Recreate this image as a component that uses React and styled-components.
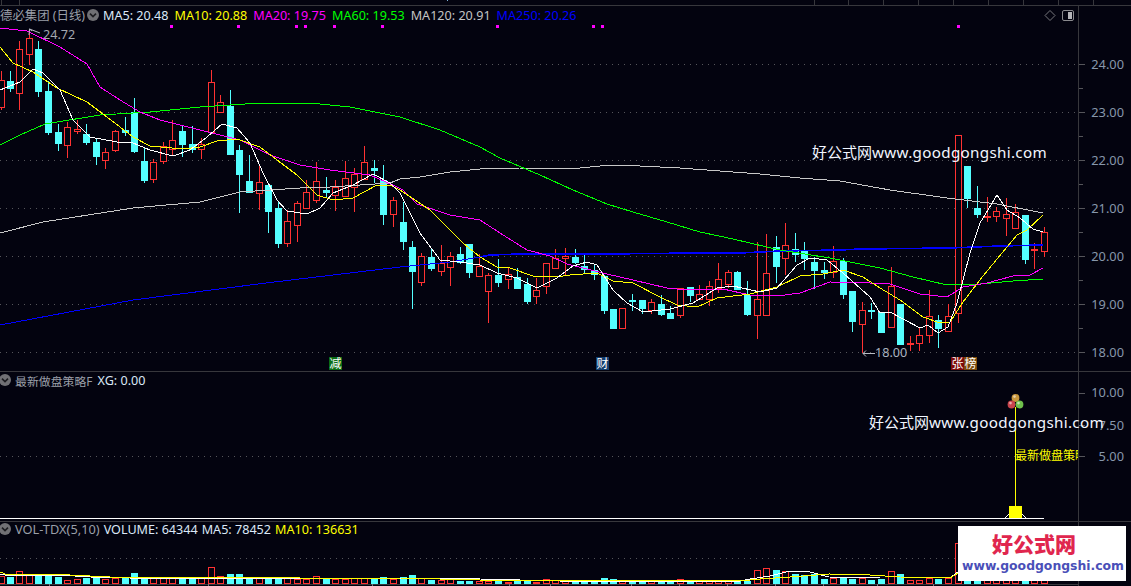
import React from "react";
import styled, { createGlobalStyle } from "styled-components";

const BG = "#03030f";
const LINE = "#37373c";
const RED = "#ff3232";
const CYAN = "#54ffff";
const FONT = `"Noto Sans", "Noto Sans CJK SC", sans-serif`;

const Global = createGlobalStyle`
  html, body { margin: 0; padding: 0; background: ${BG}; }
  *, *::before, *::after { box-sizing: border-box; }
`;

const Page = styled.div`
  position: relative;
  width: 1131px;
  height: 586px;
  overflow: hidden;
  background: ${BG};
  font-family: ${FONT};
  font-size: 12.6px;
  display: flex;
  flex-direction: column;
`;
const TopStrip = styled.svg`
  display: block;
  width: 1131px;
  height: 6px;
  flex: none;
`;
const Panel = styled.section`
  display: flex;
  flex: none;
  height: ${(p) => p.$h}px;
  border-bottom: ${(p) => (p.$last ? 0 : 1)}px solid ${LINE};
`;
const ChartArea = styled.div`
  position: relative;
  width: 1079px;
  flex: none;
  border-right: 1px solid ${LINE};
  overflow: hidden;
`;
const Plot = styled.svg`
  position: absolute;
  left: 0;
  top: 0;
  display: block;
`;
const AxisSvg = styled.svg`
  display: block;
  flex: 1;
  height: 100%;
`;
const Legend = styled.div`
  position: relative;
  display: flex;
  align-items: center;
  gap: ${(p) => p.$gap || 6}px;
  height: 18px;
  margin-top: ${(p) => p.$top || 0}px;
  white-space: nowrap;
`;
const Name = styled.span`
  flex: none;
  color: #9a9fa8;
  ${(p) => p.$w && `width: ${p.$w}px;`}
  ${(p) => p.$fs && `font-size: ${p.$fs}px;`}
`;
const Item = styled.span`
  flex: none;
  color: ${(p) => p.$c};
  margin-left: ${(p) => p.$ml || 0}px;
`;
const Chevron = styled.svg`
  width: 12px;
  height: 12px;
  flex: none;
  margin-left: ${(p) => p.$ml || 0}px;
`;
const CornerIcons = styled.svg`
  position: absolute;
  right: 2px;
  top: 3px;
`;
const Watermark = styled.div`
  position: absolute;
  left: ${(p) => p.$x}px;
  top: ${(p) => p.$y}px;
  color: #f2f6ff;
  font-size: 15px;
  line-height: 18px;
  white-space: nowrap;
`;
const WatermarkUrl = styled.span`
  letter-spacing: 0.32px;
  font-size: 15.2px;
`;
const Logo = styled.div`
  position: absolute;
  left: 958px;
  top: 526px;
  width: 168px;
  height: 55px;
  background: #ffffff;
  display: flex;
  flex-direction: column;
  align-items: center;
`;
const LogoTitle = styled.div`
  color: #e0264e;
  font: 900 21px/30px "Noto Sans CJK SC", sans-serif;
  margin-top: 2px;
  margin-left: -16px;
`;
const LogoUrl = styled.div`
  color: #4a4fb8;
  font: 700 12.4px/16px "DejaVu Sans", sans-serif;
  margin-top: 0;
  margin-left: 2px;
`;

// x, wickTop, wickBottom, bodyTop, bodyBottom, up
const U = 1, D = 0;
const candles = [
  [1,71,110,80,107,U],[10,71,92,81,88,D],[19,41,110,49,93,U],[29,30,65,38,54,U],[38,41,97,49,91,D],
  [48,81,135,91,132,D],[58,124,151,132,143,D],[67,122,158,127,145,U],[77,120,134,129,131,U],[86,124,145,134,142,D],
  [96,138,165,142,156,D],[105,148,169,152,160,U],[115,130,152,131,150,U],[125,117,136,130,132,D],[134,98,153,112,151,D],
  [144,148,183,161,180,D],[153,159,183,162,179,U],[163,142,164,146,161,U],[172,120,155,140,149,U],[182,126,157,131,144,D],
  [192,126,153,144,149,D],[201,138,159,144,149,U],[211,70,133,82,132,U],[220,95,113,102,112,U],[230,90,155,106,154,D],
  [239,145,213,150,174,D],[249,155,193,181,192,D],[259,166,210,182,193,U],[268,185,233,185,211,D],[278,202,248,208,243,D],
  [287,210,247,221,243,U],[297,201,242,203,225,U],[306,180,208,192,208,U],[316,162,203,181,200,U],[326,177,198,190,192,D],
  [335,180,211,187,195,U],[345,161,197,178,196,U],[354,168,212,174,187,U],[364,146,178,162,179,U],[374,160,183,168,170,D],
  [383,165,225,180,214,D],[393,197,227,200,214,U],[403,202,250,222,241,D],[412,241,309,247,271,D],[421,253,286,256,282,U],
  [431,249,271,257,268,D],[441,245,276,263,271,U],[450,252,286,256,267,U],[460,247,264,254,262,D],[469,244,278,244,272,D],
  [479,254,277,266,276,U],[488,273,323,275,291,U],[498,259,287,275,282,D],[508,268,289,274,279,U],[517,268,289,277,288,D],
  [527,278,304,284,301,D],[536,278,304,290,296,U],[546,263,294,263,286,U],[555,249,268,258,268,U],[565,248,275,256,258,U],
  [575,249,264,257,262,D],[584,253,273,266,269,D],[594,265,280,270,274,D],[604,275,314,276,310,D],[613,309,328,309,328,D],
  [622,308,328,308,328,U],[632,294,311,300,301,D],[642,300,314,300,308,D],[651,299,314,302,310,U],[661,295,316,304,314,D],
  [670,306,318,313,318,D],[680,288,318,288,315,U],[690,287,302,287,295,D],[699,285,300,294,299,U],[709,281,306,286,299,U],
  [718,263,293,279,288,U],[728,270,288,272,284,U],[737,271,290,272,289,D],[747,281,316,295,314,D],[757,242,339,299,315,U],
  [766,234,315,273,315,U],[776,236,283,247,266,D],[785,223,275,245,258,U],[795,233,262,249,254,D],[804,242,270,250,258,D],
  [814,257,289,262,270,D],[824,262,279,270,272,D],[833,246,278,261,272,U],[843,258,299,261,294,D],[852,291,332,291,321,D],
  [862,302,353,310,324,U],[871,303,319,310,311,D],[881,312,333,312,332,D],[891,267,327,286,327,U],[900,304,345,304,344,D],
  [910,336,351,343,344,U],[919,328,351,335,343,U],[929,290,343,316,335,U],[938,315,348,320,328,D],[948,304,331,316,331,U],
  [958,135,323,135,313,U],[967,166,208,166,198,D],[977,186,218,208,214,D],[987,197,222,216,217,U],[996,207,222,211,216,U],
  [1006,198,236,214,218,U],[1015,204,229,212,228,U],[1025,215,264,215,259,D],[1034,243,269,249,250,U],[1044,227,257,232,251,U],
];

const ma250a = "0,325 133,300 266,283 400,267 450,262 480,257";
const ma250b = "480,257 490,255 520,254 600,254 700,253 740,253 780,251 840,250 860,249 950,248 1000,246 1043,245";
const ma120 = "0,233 43,222 133,208 200,202 240,192 300,188 330,187 390,183 400,179 420,177 450,172 480,169 520,168 580,168 600,166 620,165 640,166 680,168 720,171 760,174 800,178 840,181 890,190 947,198 997,204 1043,213";
const ma60 = "0,145 20,135 45,124 100,115 150,112 200,107 260,103 310,103 350,107 400,117 440,130 480,147 500,158 540,175 573,190 607,204 633,212 667,222 700,232 733,239 767,247 780,250 830,258 880,268 913,277 947,285 980,284 1013,281 1043,279";
const ma20 = "0,28 27,31 60,47 87,64 100,87 120,100 140,112 160,120 200,130 240,140 270,155 300,165 330,170 370,175 395,186 403,190 417,204 450,215 480,220 500,233 527,250 550,256 567,264 587,269 607,274 633,280 667,288 677,289 700,290 723,289 750,295 777,296 800,293 830,282 870,283 890,284 920,294 947,297 963,287 987,283 1013,276 1030,275 1043,268";
const ma10 = "0,47 13,63 33,72 57,88 87,102 107,117 133,137 150,146 183,149 200,147 217,141 237,139 260,147 277,160 297,175 317,195 333,200 353,198 377,185 390,185 400,190 430,210 463,243 480,257 497,267 510,268 533,276 557,277 570,275 597,273 613,281 633,283 660,297 677,305 697,307 717,298 750,294 777,287 800,276 823,274 843,270 863,277 880,288 900,300 923,317 940,323 950,322 963,302 983,276 1007,247 1017,235 1027,230 1043,215";
const ma5 = "0,90 20,82 33,69 43,73 60,90 73,120 90,137 117,142 133,143 150,150 173,156 190,150 207,137 222,124 237,128 250,143 263,173 277,200 287,211 307,214 320,208 333,193 353,185 373,174 390,183 400,193 420,233 440,260 460,262 480,265 497,273 517,278 537,288 557,278 573,266 587,262 597,265 613,290 627,303 643,312 670,309 693,303 717,288 733,286 760,292 777,288 797,265 810,258 827,260 843,273 870,297 880,313 890,312 920,328 928,325 938,333 948,327 957,303 970,253 980,223 997,195 1007,210 1020,218 1033,229 1043,232";

const priceGrid = [64.5, 112.5, 160.5, 208.5, 256.5, 304.5, 352.5];
const markers = [171, 238, 296, 305, 334, 382, 497, 593, 602, 958];

// volume: bar tops in page pixels, following the candle order
const volTops = [
  576,577,571,574,574,575,577,580,579,578,577,579,578,578,573,578,578,578,578,578,578,578,567,576,574,574,578,578,577,579,
  578,579,579,576,579,579,579,578,578,579,577,579,577,575,578,580,580,579,581,581,581,
  581,581,582,581,581,582,579,580,581,581,581,582,578,579,581,581,581,581,581,582,579,581,581,581,580,581,581,581,570,568,
  570,571,574,575,574,579,578,578,579,578,580,579,571,574,580,580,578,579,578,543,
  570,575,578,579,579,579,578,580,580,
];
const volWhite = "0,574 10,576 30,575 60,575 90,577 130,578 190,578 260,578 340,578 400,578 480,579 560,581 640,581 740,581 750,579 770,576 790,571 810,572 829,577 880,578 950,578 958,572";
const volYellow = "0,572 8,575 40,574 70,575 110,577 200,577 300,578 400,578 480,580 600,580 750,580 760,579 790,577 829,574 870,575 900,577 950,578 958,573";
const bottomTicks = [49, 208, 372, 509, 550, 631, 679, 727, 775, 823, 877, 933];

const Candle = ({ c }) => {
  const [x, wt, wb, bt, bb, up] = c;
  const col = up ? RED : CYAN;
  const h = Math.max(bb - bt, 1);
  return (
    <g>
      <line x1={x + 0.5} x2={x + 0.5} y1={wt} y2={wb} stroke={col} />
      {up ? (
        <rect x={x - 2.5} y={bt + 0.5} width={6} height={h} fill={BG} stroke={col} />
      ) : (
        <rect x={x - 3} y={bt} width={7} height={h + 1} fill={col} />
      )}
    </g>
  );
};

const Ma = ({ pts, c, w = 1 }) => (
  <polyline points={pts} fill="none" stroke={c} strokeWidth={w} shapeRendering="crispEdges" />
);
const Dots = ({ y, x2 = 1078 }) => (
  <line x1="0" x2={x2} y1={y} y2={y} stroke="#55555a" strokeDasharray="1 5" shapeRendering="crispEdges" />
);
const Tag = ({ x, w = 13, bg, t }) => (
  <g>
    <rect x={x} y={357} width={w} height={13} fill={bg} />
    <text x={x + w / 2} y={368} fill="#fff" fontSize="12" textAnchor="middle" fontFamily="Noto Sans CJK SC">{t}</text>
  </g>
);
const ChevronIcon = ({ ml }) => (
  <Chevron viewBox="0 0 12 12" $ml={ml}>
    <circle cx="6" cy="6" r="6" fill="#707074" />
    <path d="M3 4.6 L6 7.6 L9 4.6" fill="none" stroke="#1c1c20" strokeWidth="1.6" />
  </Chevron>
);
const AxisText = ({ y, t }) => (
  <text x={45} y={y + 4} fill="#8797ab" fontSize="12.8" textAnchor="end" fontFamily="Noto Sans">{t}</text>
);
const Tick = ({ y, l = 6 }) => (
  <line x1="0" x2={l} y1={y} y2={y} stroke="#55555a" shapeRendering="crispEdges" />
);
const Balloon = ({ cx, cy, c }) => (
  <g>
    <circle cx={cx} cy={cy} r="3.9" fill={c} />
    <circle cx={cx - 1} cy={cy - 1.4} r="1.3" fill="#ffffff" opacity="0.55" />
  </g>
);
const Mark = () => (
  <>好公式网<WatermarkUrl>www.goodgongshi.com</WatermarkUrl></>
);

const priceAxis = [
  [64.5, "24.00"], [112.5, "23.00"], [160.5, "22.00"], [208.5, "21.00"], [256.5, "20.00"], [304.5, "19.00"], [352.5, "18.00"],
];
const topTicks = [1, 19, 814, 848, 883, 918, 953, 988, 1023, 1058, 1093];

export default function App() {
  return (
    <Page>
      <Global />
      <TopStrip viewBox="0 0 1131 6">
        {topTicks.map((x) => (
          <line key={x} x1={x + 0.5} x2={x + 0.5} y1="0" y2="5" stroke={LINE} />
        ))}
        <rect x="447" y="0" width="1" height="1" fill="#7fb2d8" />
        <line x1="0" x2="1131" y1="5.5" y2="5.5" stroke={LINE} />
      </TopStrip>

      <Panel $h={366}>
        <ChartArea>
          <Plot width="1078" height="365" viewBox="0 6 1078 365">
            {priceGrid.map((y) => <Dots key={y} y={y} />)}
            {markers.map((x) => <rect key={x} x={x - 1} y={25} width={3} height={3} fill="#ff00ff" />)}
            <g shapeRendering="crispEdges">
              {candles.map((c) => <Candle key={c[0]} c={c} />)}
              <Ma pts={ma120} c="#c8c8c8" />
              <Ma pts={ma250a} c="#0000ff" />
              <Ma pts={ma250b} c="#0000ff" w={1.6} />
              <Ma pts={ma60} c="#00ff00" />
              <Ma pts={ma20} c="#ff00ff" />
              <Ma pts={ma10} c="#ffff00" />
              <Ma pts={ma5} c="#ffffff" />
            </g>
            <path d="M29 35 L29.5 29 L32 31 M29.5 29 L40 33" fill="none" stroke="#b8bcc4" />
            <text x={43} y={38.5} fill="#a4a8b0" fontSize="12.6" fontFamily="Noto Sans">24.72</text>
            <path d="M875 353.5 H863 M866 350.5 L863 353.5 L866 356.5" fill="none" stroke="#b8bcc4" />
            <text x={875} y={357} fill="#a9b2bf" fontSize="12.6" fontFamily="Noto Sans">18.00</text>
            <Tag x={329} bg="#0b6d14" t="减" />
            <Tag x={596} bg="#123d6e" t="财" />
            <Tag x={951} bg="#7d0a0a" t="张" />
            <Tag x={964} bg="#7a4a0c" t="榜" />
          </Plot>
          <Legend>
            <Name $w={81} $fs={12.4}>德必集团 (日线)</Name>
            <ChevronIcon />
            <Item $c="#dbe8f7" $ml={-2}>MA5: 20.48</Item>
            <Item $c="#ffff00">MA10: 20.88</Item>
            <Item $c="#ff00ff">MA20: 19.75</Item>
            <Item $c="#00ff00">MA60: 19.53</Item>
            <Item $c="#c4c4c4">MA120: 20.91</Item>
            <Item $c="#0000ff">MA250: 20.26</Item>
          </Legend>
          <CornerIcons width="32" height="14" viewBox="0 0 32 14">
            <path d="M6 1.5 L11 6.5 L6 11.5 L1 6.5 Z" fill="none" stroke="#77777c" />
            <rect x="18.5" y="1.5" width="11" height="10" rx="1.5" fill="none" stroke="#8a8a8e" />
            <rect x="24" y="3" width="4" height="7" fill="#b4b4b8" />
          </CornerIcons>
        </ChartArea>
        <AxisSvg viewBox="0 6 52 365" preserveAspectRatio="xMinYMin">
          {priceAxis.map(([y, t]) => <g key={t}><Tick y={y} /><AxisText y={y} t={t} /></g>)}
          {[88, 136, 184, 232, 280, 328].map((y) => <Tick key={y} y={y} l={4} />)}
        </AxisSvg>
      </Panel>

      <Panel $h={150}>
        <ChartArea>
          <Plot width="1078" height="149" viewBox="0 372 1078 149">
            <Dots y={456.5} />
            <g shapeRendering="crispEdges">
              <line x1="1015.5" x2="1015.5" y1="407" y2="507" stroke="#ffff00" />
              <rect x="1009" y="506" width="13" height="13" fill="#ffff00" />
              <rect x="0" y="518" width="1044" height="1.4" fill="#ffffff" />
            </g>
            <path d="M1005 518 L1009 514 M1022 514 L1026 518" stroke="#ffffff" fill="none" />
            <Balloon cx={1015.5} cy={398} c="#c8963c" />
            <Balloon cx={1011.5} cy={404.5} c="#c8444c" />
            <Balloon cx={1019.5} cy={404.5} c="#6fc04c" />
            <text x="1015" y="460" fill="#ffff00" fontSize="12" fontFamily="Noto Sans CJK SC">最新做盘策略</text>
          </Plot>
          <Legend $top={-1} $gap={4}>
            <ChevronIcon ml={-1} />
            <Name $fs={11.9}>最新做盘策略F</Name>
            <Item $c="#dbe8f7" $ml={1}>XG: 0.00</Item>
          </Legend>
        </ChartArea>
        <AxisSvg viewBox="0 372 52 149" preserveAspectRatio="xMinYMin">
          {[[393, "10.00"], [425.5, "7.50"], [456.5, "5.00"]].map(([y, t]) => (
            <g key={t}><Tick y={y} /><AxisText y={y} t={t} /></g>
          ))}
        </AxisSvg>
      </Panel>

      <Panel $h={64} $last>
        <ChartArea>
          <Plot width="1078" height="64" viewBox="0 522 1078 64">
            <Dots y={558.5} />
            <g shapeRendering="crispEdges">
              {candles.map((c, i) => {
                const top = volTops[i];
                return c[5] ? (
                  <rect key={c[0]} x={c[0] - 2.5} y={top + 0.5} width={6} height={583 - top} fill={BG} stroke={RED} />
                ) : (
                  <rect key={c[0]} x={c[0] - 3} y={top} width={7} height={584 - top} fill={CYAN} />
                );
              })}
              <Ma pts={volWhite} c="#ffffff" />
              <Ma pts={volYellow} c="#ffff00" />
              <line x1="0" x2="1078" y1="584.5" y2="584.5" stroke={LINE} />
              {bottomTicks.map((x) => <line key={x} x1={x + 0.5} x2={x + 0.5} y1="584" y2="586" stroke="#77777c" />)}
            </g>
          </Plot>
          <Legend $top={-2} $gap={4}>
            <ChevronIcon ml={-1} />
            <Name $fs={12.8}>VOL-TDX(5,10)</Name>
            <Item $c="#dbe8f7">VOLUME: 64344</Item>
            <Item $c="#dbe8f7">MA5: 78452</Item>
            <Item $c="#ffff00">MA10: 136631</Item>
          </Legend>
        </ChartArea>
      </Panel>

      <Watermark $x={812} $y={143}><Mark /></Watermark>
      <Watermark $x={869} $y={413}><Mark /></Watermark>
      <Logo>
        <LogoTitle>好公式网</LogoTitle>
        <LogoUrl>www.goodgongshi.com</LogoUrl>
      </Logo>
    </Page>
  );
}
